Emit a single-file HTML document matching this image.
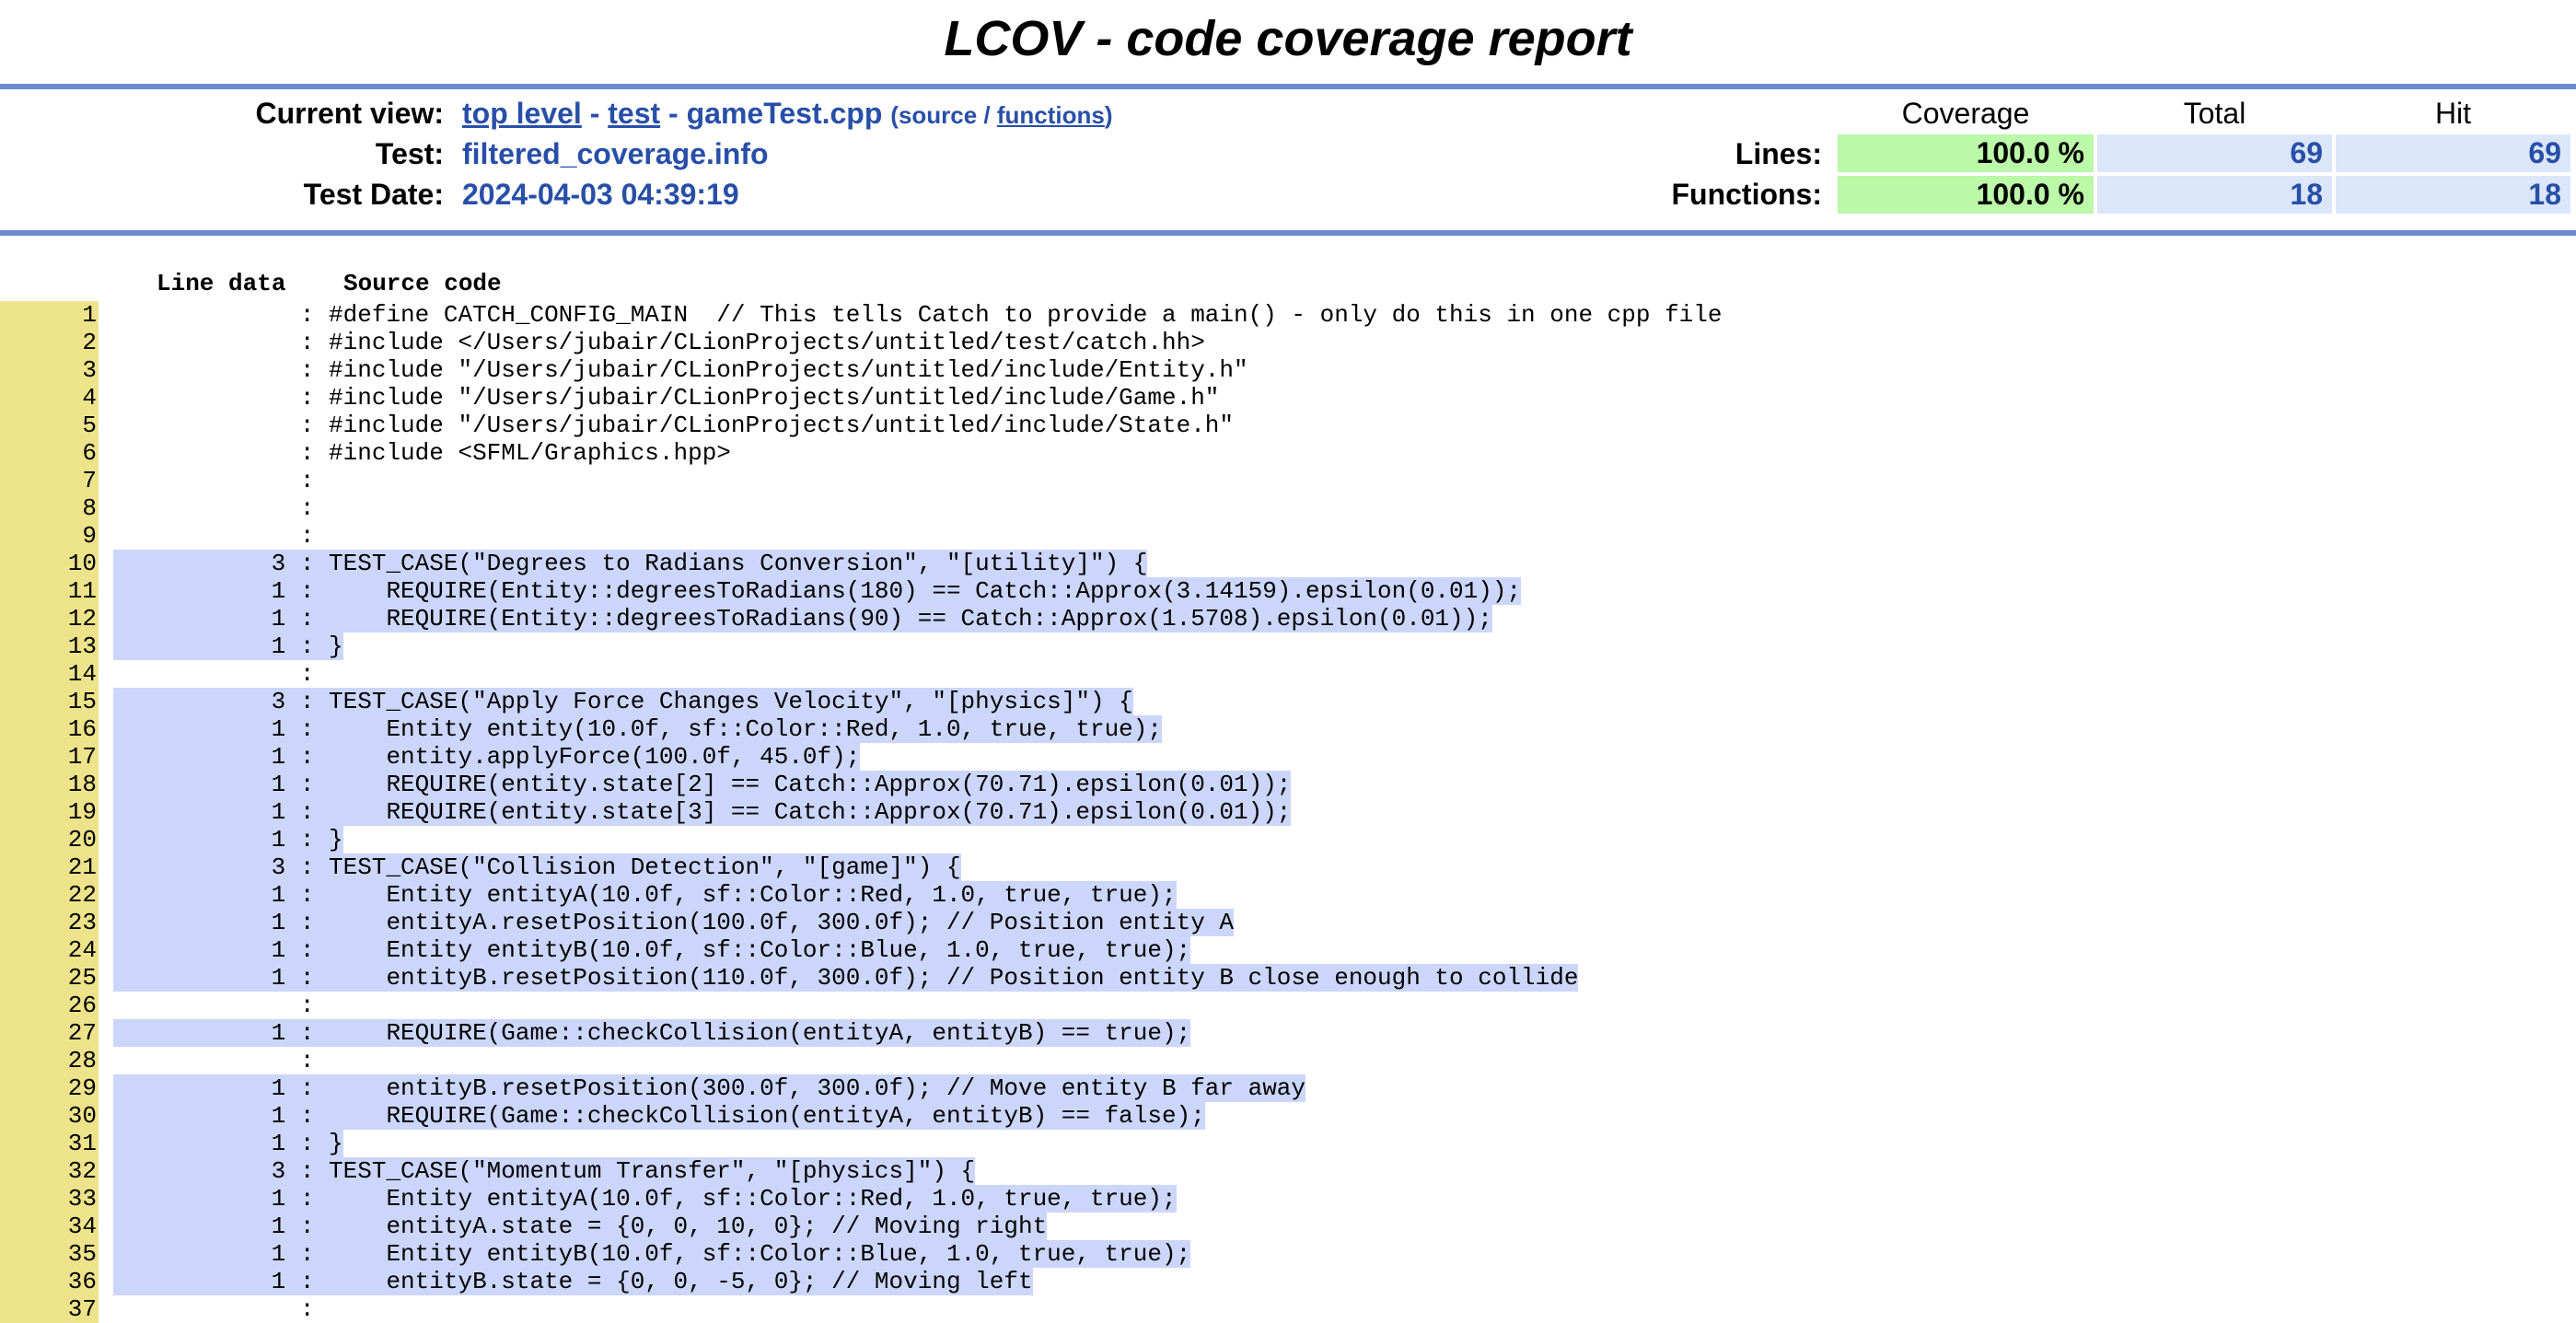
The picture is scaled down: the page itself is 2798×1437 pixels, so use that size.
<!DOCTYPE html>
<html><head><meta charset="utf-8"><style>
body{margin:0;background:#fff;width:2798px;height:1426px;overflow:hidden;position:relative;font-family:"Liberation Sans",Arial,sans-serif}
.title{position:absolute;top:9px;left:0;width:2798px;text-align:center;font-weight:bold;font-style:italic;font-size:54px;line-height:66px}
.rule{position:absolute;left:0;width:2798px;height:6px;background:#6c89d0}
.lbl{position:absolute;font-weight:bold;font-size:32px;text-align:right;line-height:40px}
.val{position:absolute;font-weight:bold;font-size:32px;color:#284fa8;line-height:40px;white-space:nowrap}
.val a{color:#284fa8;text-decoration:underline}
.small{font-size:26px}
.cell{position:absolute;height:41px;line-height:41px;font-size:32px;font-weight:bold;text-align:right;box-sizing:border-box;padding-right:10px}
.g{background:#bbf8a8;color:#000}
.b{background:#dbe6fb;color:#284fa8}
.hd{position:absolute;font-size:32px;text-align:center;line-height:40px;top:103px}
.code{position:absolute;left:0;top:327px;font-family:"Liberation Mono",monospace;font-size:26px}
.r{height:30px;line-height:30px;white-space:pre;position:relative}
.n{position:absolute;left:0;top:0;width:107px;height:30px;background:#ede38b;text-align:right;box-sizing:border-box;padding-right:2px}
.t{position:absolute;left:123px;top:0;height:30px}
.h{background:#cbd6fa}
.ch{position:absolute;top:290px;font-family:"Liberation Mono",monospace;font-size:26px;font-weight:bold;line-height:36px}
</style></head><body>
<div class="title">LCOV - code coverage report</div>
<div class="rule" style="top:91px"></div>
<div class="rule" style="top:250px"></div>
<div class="lbl" style="right:2316px;top:103px">Current view:</div>
<div class="lbl" style="right:2316px;top:147px">Test:</div>
<div class="lbl" style="right:2316px;top:191px">Test Date:</div>
<div class="val" style="left:502px;top:103px"><a>top level</a> - <a>test</a> - gameTest.cpp <span class="small">(source / <a>functions</a>)</span></div>
<div class="val" style="left:502px;top:147px">filtered_coverage.info</div>
<div class="val" style="left:502px;top:191px">2024-04-03 04:39:19</div>
<div class="hd" style="left:1996px;width:278px">Coverage</div>
<div class="hd" style="left:2278px;width:255px">Total</div>
<div class="hd" style="left:2537px;width:255px">Hit</div>
<div class="lbl" style="right:819px;top:147px">Lines:</div>
<div class="lbl" style="right:819px;top:191px">Functions:</div>
<div class="cell g" style="left:1996px;top:146px;width:278px">100.0 %</div>
<div class="cell b" style="left:2278px;top:146px;width:255px">69</div>
<div class="cell b" style="left:2537px;top:146px;width:255px">69</div>
<div class="cell g" style="left:1996px;top:191px;width:278px">100.0 %</div>
<div class="cell b" style="left:2278px;top:191px;width:255px">18</div>
<div class="cell b" style="left:2537px;top:191px;width:255px">18</div>
<div class="ch" style="left:170px">Line data</div>
<div class="ch" style="left:373px">Source code</div>
<div class="code">
<div class="r"><span class="n">1</span><span class="t">             : #define CATCH_CONFIG_MAIN  // This tells Catch to provide a main() - only do this in one cpp file</span></div>
<div class="r"><span class="n">2</span><span class="t">             : #include &lt;/Users/jubair/CLionProjects/untitled/test/catch.hh&gt;</span></div>
<div class="r"><span class="n">3</span><span class="t">             : #include "/Users/jubair/CLionProjects/untitled/include/Entity.h"</span></div>
<div class="r"><span class="n">4</span><span class="t">             : #include "/Users/jubair/CLionProjects/untitled/include/Game.h"</span></div>
<div class="r"><span class="n">5</span><span class="t">             : #include "/Users/jubair/CLionProjects/untitled/include/State.h"</span></div>
<div class="r"><span class="n">6</span><span class="t">             : #include &lt;SFML/Graphics.hpp&gt;</span></div>
<div class="r"><span class="n">7</span><span class="t">             : </span></div>
<div class="r"><span class="n">8</span><span class="t">             : </span></div>
<div class="r"><span class="n">9</span><span class="t">             : </span></div>
<div class="r"><span class="n">10</span><span class="t h">           3 : TEST_CASE("Degrees to Radians Conversion", "[utility]") {</span></div>
<div class="r"><span class="n">11</span><span class="t h">           1 :     REQUIRE(Entity::degreesToRadians(180) == Catch::Approx(3.14159).epsilon(0.01));</span></div>
<div class="r"><span class="n">12</span><span class="t h">           1 :     REQUIRE(Entity::degreesToRadians(90) == Catch::Approx(1.5708).epsilon(0.01));</span></div>
<div class="r"><span class="n">13</span><span class="t h">           1 : }</span></div>
<div class="r"><span class="n">14</span><span class="t">             : </span></div>
<div class="r"><span class="n">15</span><span class="t h">           3 : TEST_CASE("Apply Force Changes Velocity", "[physics]") {</span></div>
<div class="r"><span class="n">16</span><span class="t h">           1 :     Entity entity(10.0f, sf::Color::Red, 1.0, true, true);</span></div>
<div class="r"><span class="n">17</span><span class="t h">           1 :     entity.applyForce(100.0f, 45.0f);</span></div>
<div class="r"><span class="n">18</span><span class="t h">           1 :     REQUIRE(entity.state[2] == Catch::Approx(70.71).epsilon(0.01));</span></div>
<div class="r"><span class="n">19</span><span class="t h">           1 :     REQUIRE(entity.state[3] == Catch::Approx(70.71).epsilon(0.01));</span></div>
<div class="r"><span class="n">20</span><span class="t h">           1 : }</span></div>
<div class="r"><span class="n">21</span><span class="t h">           3 : TEST_CASE("Collision Detection", "[game]") {</span></div>
<div class="r"><span class="n">22</span><span class="t h">           1 :     Entity entityA(10.0f, sf::Color::Red, 1.0, true, true);</span></div>
<div class="r"><span class="n">23</span><span class="t h">           1 :     entityA.resetPosition(100.0f, 300.0f); // Position entity A</span></div>
<div class="r"><span class="n">24</span><span class="t h">           1 :     Entity entityB(10.0f, sf::Color::Blue, 1.0, true, true);</span></div>
<div class="r"><span class="n">25</span><span class="t h">           1 :     entityB.resetPosition(110.0f, 300.0f); // Position entity B close enough to collide</span></div>
<div class="r"><span class="n">26</span><span class="t">             : </span></div>
<div class="r"><span class="n">27</span><span class="t h">           1 :     REQUIRE(Game::checkCollision(entityA, entityB) == true);</span></div>
<div class="r"><span class="n">28</span><span class="t">             : </span></div>
<div class="r"><span class="n">29</span><span class="t h">           1 :     entityB.resetPosition(300.0f, 300.0f); // Move entity B far away</span></div>
<div class="r"><span class="n">30</span><span class="t h">           1 :     REQUIRE(Game::checkCollision(entityA, entityB) == false);</span></div>
<div class="r"><span class="n">31</span><span class="t h">           1 : }</span></div>
<div class="r"><span class="n">32</span><span class="t h">           3 : TEST_CASE("Momentum Transfer", "[physics]") {</span></div>
<div class="r"><span class="n">33</span><span class="t h">           1 :     Entity entityA(10.0f, sf::Color::Red, 1.0, true, true);</span></div>
<div class="r"><span class="n">34</span><span class="t h">           1 :     entityA.state = {0, 0, 10, 0}; // Moving right</span></div>
<div class="r"><span class="n">35</span><span class="t h">           1 :     Entity entityB(10.0f, sf::Color::Blue, 1.0, true, true);</span></div>
<div class="r"><span class="n">36</span><span class="t h">           1 :     entityB.state = {0, 0, -5, 0}; // Moving left</span></div>
<div class="r"><span class="n">37</span><span class="t">             : </span></div>
</div>
</body></html>
